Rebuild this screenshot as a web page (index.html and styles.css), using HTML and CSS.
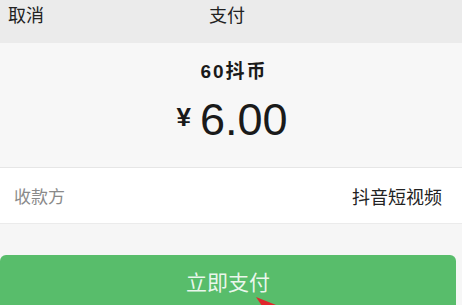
FILE: index.html
```html
<!DOCTYPE html>
<html lang="zh-CN">
<head>
    <meta charset="UTF-8">
    <title>支付</title>
    <link rel="stylesheet" href="styles.css">
</head>
<body>
    <div class="topbar">
        <span class="cancel">取消</span>
        <span class="title">支付</span>
        <span></span>
    </div>
    <div class="summary">
        <p class="coins">60抖币</p>
        <p class="amount"><span class="yen">¥</span>6.00</p>
    </div>
    <div class="row">
        <span class="label">收款方</span>
        <span class="value">抖音短视频</span>
    </div>
    <div class="pay-btn">
        立即支付
        <svg class="pointer" width="24" height="14" viewBox="0 0 24 14">
            <polygon points="2,2 22,10 22,14 10,14" fill="#e0262b"/>
        </svg>
    </div>
</body>
</html>
```

FILE: styles.css
```css
*{margin:0;padding:0;}
body{
    background-color: #f6f6f6;
    font-family: "Liberation Sans","Noto Sans CJK SC",sans-serif;
    color: #1a1a1a;
    overflow: hidden;
}
.topbar{
    display: grid;
    grid-template-columns: 1fr auto 1fr;
    height: 43px;
    line-height: 33px;
    padding: 0 16px 0 8px;
    background-color: #ebebeb;
    font-size: 18px;
    color: #222;
}
.summary{
    padding: 16px 0 22px;
    background-color: #f7f7f7;
    text-align: center;
}
.coins{
    font-size: 19px;
    line-height: 25px;
    font-weight: bold;
    letter-spacing: 2px;
    padding-left: 6px;
}
.amount{
    margin-top: 8px;
    font-size: 45px;
    line-height: 50px;
    padding-left: 2px;
}
.yen{
    font-size: 26px;
    font-weight: bold;
    vertical-align: 9px;
    margin-right: 9px;
}
.row{
    display: flex;
    justify-content: space-between;
    align-items: center;
    height: 55px;
    padding: 0 20px 0 14px;
    background-color: #fff;
    border-top: 1px solid #e6e6e6;
    border-bottom: 1px solid #ebebeb;
}
.label{
    color: #8a8a8a;
    font-size: 17px;
}
.value{
    color: #222;
    font-size: 18px;
}
.pay-btn{
    position: relative;
    margin: 31px 6px 0 0;
    height: 60px;
    line-height: 56px;
    border-radius: 6px;
    background-color: #58bd6b;
    color: rgba(255,255,255,0.88);
    font-size: 21px;
    text-align: center;
}
.pointer{
    position: absolute;
    left: 254px;
    top: 40px;
}
```
